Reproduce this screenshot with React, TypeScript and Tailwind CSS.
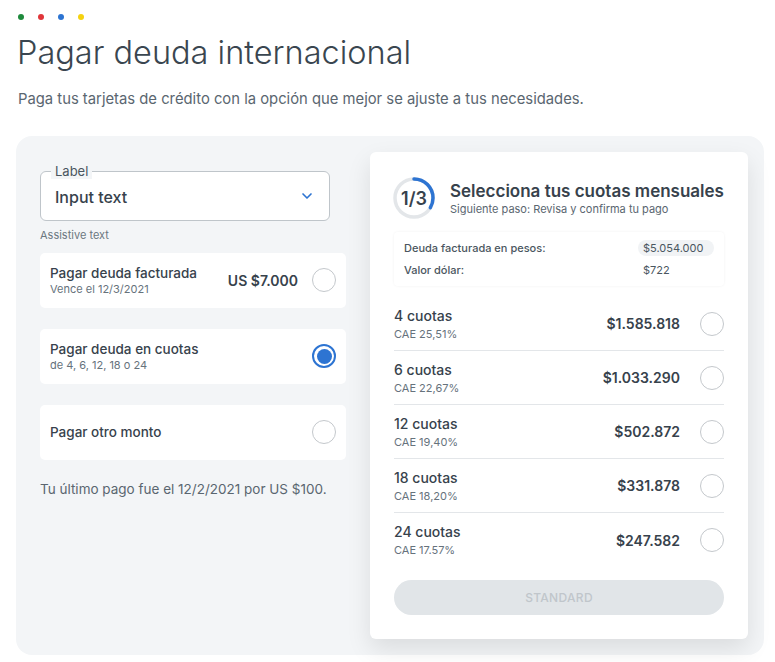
import { ChevronDown } from 'lucide-react'

const OPTIONS = [
  { title: 'Pagar deuda facturada', sub: 'Vence el 12/3/2021', amount: 'US $7.000', checked: false },
  { title: 'Pagar deuda en cuotas', sub: 'de 4, 6, 12, 18 o 24', amount: '', checked: true },
  { title: 'Pagar otro monto', sub: '', amount: '', checked: false },
]

const CUOTAS = [
  { n: '4 cuotas', cae: 'CAE 25,51%', price: '$1.585.818' },
  { n: '6 cuotas', cae: 'CAE 22,67%', price: '$1.033.290' },
  { n: '12 cuotas', cae: 'CAE 19,40%', price: '$502.872' },
  { n: '18 cuotas', cae: 'CAE 18,20%', price: '$331.878' },
  { n: '24 cuotas', cae: 'CAE 17.57%', price: '$247.582' },
]

function Radio({ checked }: { checked?: boolean }) {
  if (checked) {
    return (
      <div className="w-[24px] h-[24px] rounded-full border-2 border-[#2d74d2] flex items-center justify-center shrink-0">
        <div className="w-[15px] h-[15px] rounded-full bg-[#2d74d2]" />
      </div>
    )
  }
  return <div className="w-[24px] h-[24px] rounded-full border border-[#c4c8cc] bg-white shrink-0" />
}

function Progress() {
  const r = 19
  const c = 2 * Math.PI * r
  return (
    <div className="relative w-[44px] h-[44px] shrink-0">
      <svg width="44" height="44" viewBox="0 0 44 44">
        <circle cx="22" cy="22" r={r} fill="none" stroke="#e3e6e9" strokeWidth="3.5" />
        <circle
          cx="22" cy="22" r={r} fill="none" stroke="#2d74d2" strokeWidth="3.5"
          strokeDasharray={`${c / 3} ${c}`} transform="rotate(-90 22 22)" strokeLinecap="round"
        />
      </svg>
      <span className="absolute inset-0 flex items-center justify-center text-[18px] font-semibold text-[#37424c]">1/3</span>
    </div>
  )
}

export default function App() {
  return (
    <div className="w-[775px] h-[662px] bg-white text-[#37424c] overflow-hidden" style={{ fontFamily: 'Inter, "Open Sans", sans-serif' }}>
      {/* window dots */}
      <div className="flex gap-[14px] pl-[18px] pt-[14px]">
        <span className="w-[6px] h-[6px] rounded-full bg-[#1e8a3c]" />
        <span className="w-[6px] h-[6px] rounded-full bg-[#e0363a]" />
        <span className="w-[6px] h-[6px] rounded-full bg-[#2d74d2]" />
        <span className="w-[6px] h-[6px] rounded-full bg-[#f5d20f]" />
      </div>

      <h1 className="pl-[17px] mt-[13px] text-[32.5px] font-light leading-[40px] text-[#3a4650]">Pagar deuda internacional</h1>
      <p className="pl-[18px] mt-[15px] text-[14.8px] text-[#5a6670]">Paga tus tarjetas de crédito con la opción que mejor se ajuste a tus necesidades.</p>

      {/* panel */}
      <div className="ml-[16px] mr-[11px] mt-[26px] bg-[#f3f5f7] rounded-[16px] flex gap-[24px] pl-[24px] pr-[16px] pt-[16px] pb-[16px]">
        {/* left */}
        <div className="w-[306px] pt-[19px]">
          <div className="relative w-[290px] h-[50px] rounded-[6px] border border-[#bfc5ca] bg-white flex items-center justify-between pl-[14px] pr-[14px]">
            <span className="absolute -top-[9px] left-[10px] px-[4px] bg-[#f3f5f7] text-[13px] leading-[16px] text-[#4a5660]">Label</span>
            <span className="text-[16px] font-medium text-[#37424c] mt-[2px]">Input text</span>
            <ChevronDown size={16} strokeWidth={2.5} className="text-[#2d74d2]" />
          </div>
          <p className="mt-[6px] text-[11px] text-[#6b7780]">Assistive text</p>

          <div className="mt-[9px] flex flex-col gap-[21px]">
            {OPTIONS.map((o) => (
              <div key={o.title} className="h-[55px] bg-white rounded-[5px] flex items-center pl-[10px] pr-[10px]">
                <div className="flex-1">
                  <p className="text-[13.5px] font-medium leading-[18px]">{o.title}</p>
                  {o.sub && <p className="text-[11px] text-[#66727c] leading-[15px]">{o.sub}</p>}
                </div>
                {o.amount && <span className="text-[14px] font-semibold mr-[14px]">{o.amount}</span>}
                <Radio checked={o.checked} />
              </div>
            ))}
          </div>

          <p className="mt-[19px] text-[13.5px] text-[#5a6670]">Tu último pago fue el 12/2/2021 por US $100.</p>
        </div>

        {/* right card */}
        <div className="w-[378px] bg-white rounded-[6px] shadow-[0_10px_24px_rgba(0,0,0,0.10)] px-[24px] pt-[24px] pb-[24px]">
          <div className="flex items-center gap-[14px] -ml-[2px]">
            <Progress />
            <div>
              <p className="text-[17px] font-semibold leading-[22px]">Selecciona tus cuotas mensuales</p>
              <p className="text-[11px] text-[#5a6670] leading-[14px]">Siguiente paso: Revisa y confirma tu pago</p>
            </div>
          </div>

          <div className="mt-[12px] rounded-[4px] shadow-[0_0_3px_rgba(0,0,0,0.06)] px-[10px] py-[5px] text-[11px] font-medium text-[#4a5660]">
            <div className="flex items-center h-[22px]">
              <span className="flex-1">Deuda facturada en pesos:</span>
              <span className="w-[76px] bg-[#f1f3f5] rounded-full px-[5px] font-normal">$5.054.000</span>
            </div>
            <div className="flex items-center h-[22px]">
              <span className="flex-1">Valor dólar:</span>
              <span className="w-[76px] px-[5px] font-normal">$722</span>
            </div>
          </div>

          <div className="mt-[11px]">
            {CUOTAS.map((c, i) => (
              <div key={c.n} className={`h-[54px] flex items-center ${i < CUOTAS.length - 1 ? 'border-b border-[#e3e6e9]' : ''}`}>
                <div className="flex-1">
                  <p className="text-[14px] font-medium leading-[20px]">{c.n}</p>
                  <p className="text-[11px] text-[#66727c] leading-[16px]">{c.cae}</p>
                </div>
                <span className="text-[14px] font-semibold mr-[20px]">{c.price}</span>
                <Radio />
              </div>
            ))}
          </div>

          <button className="mt-[13px] w-full h-[35px] rounded-full bg-[#e1e5e8] text-[12px] font-medium tracking-wide text-[#c0c6cb]">STANDARD</button>
        </div>
      </div>
    </div>
  )
}
